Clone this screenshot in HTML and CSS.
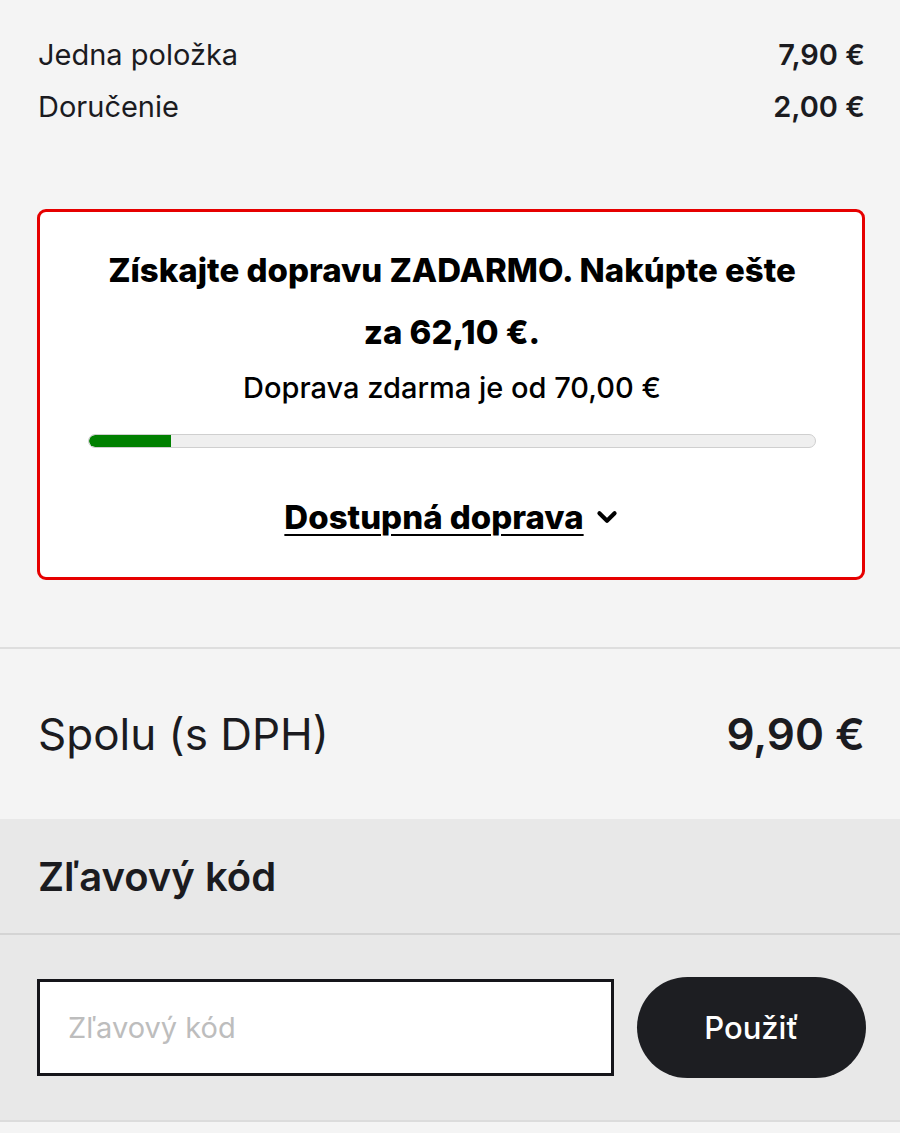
FILE: index.html
```html
<!DOCTYPE html>
<html lang="sk">
<head>
<meta charset="utf-8">
<link rel="stylesheet" href="styles.css">
</head>
<body>
<div class="page">
  <section class="summary">
    <div class="row"><span>Jedna položka</span><span class="price">7,90 €</span></div>
    <div class="row"><span>Doručenie</span><span class="price">2,00 €</span></div>
  </section>
  <section class="promo-wrap">
    <div class="promo">
      <p class="promo-title">Získajte dopravu ZADARMO. Nakúpte ešte za 62,10&nbsp;€.</p>
      <p class="promo-sub">Doprava zdarma je od 70,00 €</p>
      <div class="bar"><div class="bar-fill" style="width:11.3%"></div></div>
      <a class="shipping-link" href="#"><span class="u">Dostupná doprava</span>
        <svg class="chev" viewBox="0 0 24 24" width="26" height="26"><path d="M5 8.5l7 7 7-7" fill="none" stroke="#000" stroke-width="3.8" stroke-linecap="round" stroke-linejoin="round"/></svg>
      </a>
    </div>
  </section>
  <section class="total">
    <span class="total-label">Spolu (s DPH)</span>
    <span class="total-price">9,90 €</span>
  </section>
  <section class="discount">
    <h2 class="discount-head">Zľavový kód</h2>
    <div class="discount-body">
      <input class="code" type="text" placeholder="Zľavový kód">
      <button class="apply">Použiť</button>
    </div>
  </section>
</div>
</body>
</html>
```

FILE: styles.css
```css
* { box-sizing: border-box; }
html, body { margin: 0; padding: 0; }
body {
  background: #f4f4f4;
  font-family: Inter, "Noto Sans", sans-serif;
  color: #1b1b1f;
}
.page { width: 900px; }
.summary {
  padding: 37px 35px 0 38px;
  display: flex;
  flex-direction: column;
  gap: 16px;
}
.row {
  display: flex;
  justify-content: space-between;
  font-size: 29px;
  line-height: 36px;
}
.price { font-weight: 600; }
.promo-wrap { padding: 84px 35px 0 37px; }
.promo {
  background: #fff;
  border: 3px solid #e60000;
  border-radius: 9px;
  padding: 27px 46px 40px 48px;
  text-align: center;
}
.promo-title {
  margin: 0;
  font-size: 33px;
  font-weight: 800;
  line-height: 62px;
  color: #000;
  padding: 0 10px;
}
.promo-sub {
  margin: 0;
  font-size: 29px;
  font-weight: 500;
  line-height: 36px;
  color: #000;
  padding-top: 7px;
}
.bar {
  margin-top: 28px;
  height: 14px;
  background: #efefef;
  border: 1px solid #cfcfcf;
  border-radius: 7px;
  overflow: hidden;
}
.bar-fill { height: 100%; background: #008000; border-radius: 7px 0 0 7px; }
.shipping-link {
  display: inline-flex;
  align-items: center;
  gap: 10px;
  margin-top: 49px;
  font-size: 33px;
  font-weight: 800;
  color: #000;
  text-decoration: none;
  line-height: 40px;
}
.shipping-link .u { text-decoration: underline; text-underline-offset: 5px; text-decoration-thickness: 2px; }
.chev { display: block; }
.total {
  margin-top: 67px;
  border-top: 2px solid #dedede;
  height: 172px;
  display: flex;
  justify-content: space-between;
  align-items: center;
  padding: 0 35px 0 38px;
}
.total-label { font-size: 44px; font-weight: 400; }
.total-price { font-size: 44px; font-weight: 600; }
.discount {
  background: #e8e8e8;
  border-bottom: 2px solid #dcdcdc;
}
.discount-head {
  margin: 0;
  height: 116px;
  display: flex;
  align-items: center;
  padding: 0 38px;
  font-size: 40px;
  font-weight: 600;
  border-bottom: 2px solid #d4d4d4;
}
.discount-body {
  display: flex;
  align-items: center;
  gap: 23px;
  padding: 42px 34px 42px 37px;
}
.code {
  width: 577px;
  height: 97px;
  border: 3px solid #15151a;
  background: #fff;
  padding: 0 28px;
  font-family: Inter, "Noto Sans", sans-serif;
  font-size: 29px;
  outline: none;
  border-radius: 0;
}
.code::placeholder { color: #bdbdbd; }
.apply {
  flex: 1;
  height: 101px;
  border: none;
  border-radius: 51px;
  background: #1d1e22;
  color: #fff;
  font-family: Inter, "Noto Sans", sans-serif;
  font-size: 31px;
  font-weight: 500;
}
```
